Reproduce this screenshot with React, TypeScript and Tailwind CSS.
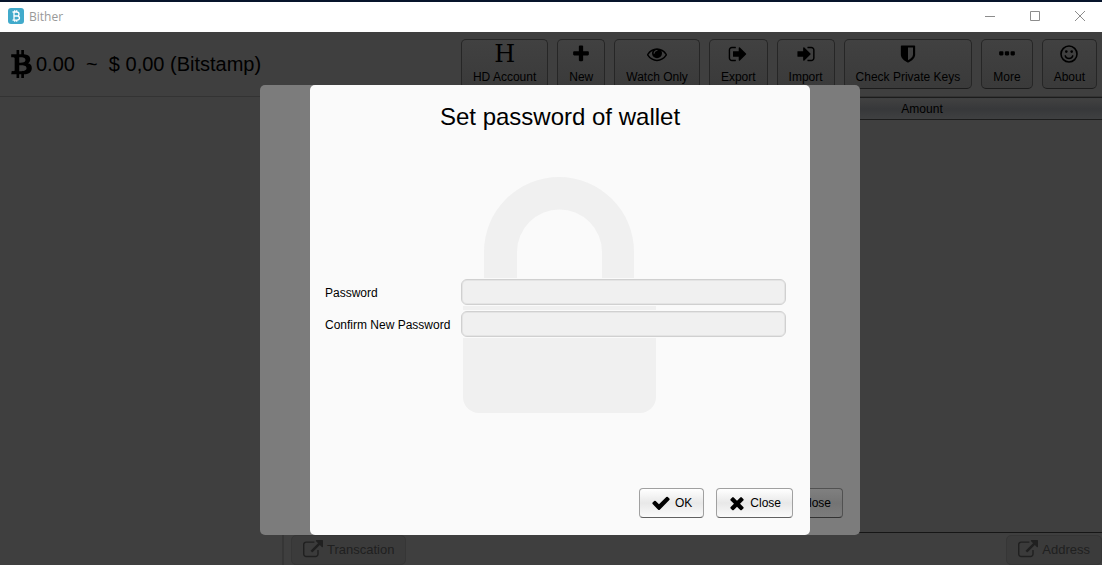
import React from "react";
import { FaBtc } from "react-icons/fa";

const PATHS = {
  plus: "M1600 736v192q0 40-28 68t-68 28h-416v416q0 40-28 68t-68 28h-192q-40 0-68-28t-28-68v-416h-416q-40 0-68-28t-28-68v-192q0-40 28-68t68-28h416v-416q0-40 28-68t68-28h192q40 0 68 28t28 68v416h416q40 0 68 28t28 68z",
  eye: "M1664 960q-152-236-381-353 61 104 61 225 0 185-131.5 316.5t-316.5 131.5-316.5-131.5-131.5-316.5q0-121 61-225-229 117-381 353 133 205 333.5 326.5t434.5 121.5 434.5-121.5 333.5-326.5zm-720-384q0-20-14-34t-34-14q-125 0-214.5 89.5t-89.5 214.5q0 20 14 34t34 14 34-14 14-34q0-86 61-147t147-61q20 0 34-14t14-34zm848 384q0 34-20 69-140 230-376.5 368.5t-499.5 138.5-499.5-139-376.5-368q-20-35-20-69t20-69q140-229 376.5-368t499.5-139 499.5 139 376.5 368q20 35 20 69z",
  signOut:
    "M704 1440q0 4 1 20t.5 26.5-3 23.5-10 19.5-20.5 6.5h-320q-119 0-203.5-84.5t-84.5-203.5v-704q0-119 84.5-203.5t203.5-84.5h320q13 0 22.5 9.5t9.5 22.5q0 4 1 20t.5 26.5-3 23.5-10 19.5-20.5 6.5h-320q-66 0-113 47t-47 113v704q0 66 47 113t113 47h312l11.5 1 11.5 3 8 5.5 7 9 2 13.5zm928-544q0 26-19 45l-544 544q-19 19-45 19t-45-19-19-45v-288h-448q-26 0-45-19t-19-45v-384q0-26 19-45t45-19h448v-288q0-26 19-45t45-19 45 19l544 544q19 19 19 45z",
  signIn:
    "M1312 896q0 26-19 45l-544 544q-19 19-45 19t-45-19-19-45v-288h-448q-26 0-45-19t-19-45v-384q0-26 19-45t45-19h448v-288q0-26 19-45t45-19 45 19l544 544q19 19 19 45zm352-352v704q0 119-84.5 203.5t-203.5 84.5h-320q-13 0-22.5-9.5t-9.5-22.5q0-4-1-20t-.5-26.5 3-23.5 10-19.5 20.5-6.5h320q66 0 113-47t47-113v-704q0-66-47-113t-113-47h-312l-11.5-1-11.5-3-8-5.5-7-9-2-13.5q0-4-1-20t-.5-26.5 3-23.5 10-19.5 20.5-6.5h320q119 0 203.5 84.5t84.5 203.5z",
  shield:
    "M1344 960v-640h-448v1137q119-63 213-137 235-184 235-360zm192-768v768q0 86-33.5 170.5t-83 150-118 127.5-126.5 103-121 77.5-89.5 49.5-42.5 20q-12 6-26 6t-26-6q-16-7-42.5-20t-89.5-49.5-121-77.5-126.5-103-118-127.5-83-150-33.5-170.5v-768q0-26 19-45t45-19h1152q26 0 45 19t19 45z",
  more: "M576 736v192q0 40-28 68t-68 28h-192q-40 0-68-28t-28-68v-192q0-40 28-68t68-28h192q40 0 68 28t28 68zm512 0v192q0 40-28 68t-68 28h-192q-40 0-68-28t-28-68v-192q0-40 28-68t68-28h192q40 0 68 28t28 68zm512 0v192q0 40-28 68t-68 28h-192q-40 0-68-28t-28-68v-192q0-40 28-68t68-28h192q40 0 68 28t28 68z",
  check:
    "M1671 566q0 40-28 68l-724 724-136 136q-28 28-68 28t-68-28l-136-136-362-362q-28-28-28-68t28-68l136-136q28-28 68-28t68 28l294 295 656-657q28-28 68-28t68 28l136 136q28 28 28 68z",
  times:
    "M1490 1322q0 40-28 68l-136 136q-28 28-68 28t-68-28l-294-294-294 294q-28 28-68 28t-68-28l-136-136q-28-28-28-68t28-68l294-294-294-294q-28-28-28-68t28-68l136-136q28-28 68-28t68 28l294 294 294-294q28-28 68-28t68 28l136 136q28 28 28 68t-28 68l-294 294 294 294q28 28 28 68z",
  external:
    "M1408 928v320q0 119-84.5 203.5t-203.5 84.5h-832q-119 0-203.5-84.5t-84.5-203.5v-832q0-119 84.5-203.5t203.5-84.5h704q14 0 23 9t9 23v64q0 14-9 23t-23 9h-704q-66 0-113 47t-47 113v832q0 66 47 113t113 47h832q66 0 113-47t47-113v-320q0-14 9-23t23-9h64q14 0 23 9t9 23zm384-864v512q0 26-19 45t-45 19-45-19l-176-176-652 652q-10 10-23 10t-23-10l-114-114q-10-10-10-23t10-23l652-652-176-176q-19-19-19-45t19-45 45-19h512q26 0 45 19t19 45z",
};

function Glyph({ name, className }: { name: keyof typeof PATHS; className: string }) {
  return (
    <svg viewBox="0 0 1792 1792" fill="currentColor" aria-hidden="true" className={className}>
      <path d={PATHS[name]} />
    </svg>
  );
}

function Smile() {
  return (
    <svg viewBox="0 0 20 20" aria-hidden="true" className="size-5" fill="none" stroke="currentColor">
      <circle cx="10" cy="10" r="8" strokeWidth="1.6" />
      <path d="M6.2 11.8a4 4 0 0 0 7.6 0" strokeWidth="1.4" strokeLinecap="round" />
      <circle cx="7.3" cy="7.6" r="1.3" fill="currentColor" stroke="none" />
      <circle cx="12.7" cy="7.6" r="1.3" fill="currentColor" stroke="none" />
    </svg>
  );
}

function ToolButton({ label, icon }: { label: string; icon: React.ReactNode }) {
  return (
    <button
      type="button"
      className="flex h-[50px] flex-col items-center rounded-[5px] border border-[#262626] border-b-[#1c1c1c] bg-linear-to-b from-[#414141] to-[#3a3a3a] px-[11px] pt-1 text-black"
    >
      <span className="flex h-5 items-center justify-center">{icon}</span>
      <span className="mt-[5px] text-xs leading-4 whitespace-nowrap">{label}</span>
    </button>
  );
}

function TitleBar() {
  return (
    <header className="flex h-8 shrink-0 items-center border-t-2 border-[#06142b] bg-white pl-2">
      <svg viewBox="0 0 16 16" aria-hidden="true" className="mb-0.5 size-4">
        <rect width="16" height="16" rx="3" fill="#41aacb" />
        <path
          d="M4.500 4h4.200q2.300 0 2.300 2t-1.800 2q2.300.2 2.300 2.100T8.900 12.200H4.500M6 4v8.200M6 8h3M6.700 2.300V4M8.700 2.300V4M6.700 12.200v1.600M8.700 12.200v1.600"
          fill="none"
          stroke="#fff"
          strokeWidth="1.3"
        />
      </svg>
      <h1 className="ml-[5px] font-['Open_Sans','Noto_Sans',sans-serif] text-xs text-[#999]">Bither</h1>
      <div className="ml-auto flex h-full pb-0.5 text-[#8c8c8c]">
        <button type="button" aria-label="Minimize" className="flex w-[45px] items-center justify-center">
          <svg viewBox="0 0 10 10" className="size-2.5" stroke="currentColor" fill="none">
            <path d="M0 5.500h10" />
          </svg>
        </button>
        <button type="button" aria-label="Maximize" className="flex w-[45px] items-center justify-center">
          <svg viewBox="0 0 10 10" className="size-2.5" stroke="currentColor" fill="none">
            <path d="M.5.500h9v9h-9z" />
          </svg>
        </button>
        <button type="button" aria-label="Close window" className="flex w-[45px] items-center justify-center">
          <svg viewBox="0 0 10 10" className="size-2.5" stroke="currentColor" fill="none">
            <path d="M0 0l10 10M10 0L0 10" />
          </svg>
        </button>
      </div>
    </header>
  );
}

function DialogButton({ icon, label }: { icon: "check" | "times"; label: string }) {
  return (
    <button
      type="button"
      className="flex h-[30px] items-center gap-1 rounded border border-[#a0a0a0] border-b-[#606060] bg-linear-to-b from-white via-[#e8e8e8] to-[#fafafa] px-[11px] text-xs text-black"
    >
      <Glyph name={icon} className={icon === "times" ? "-mx-px size-5" : "size-5"} />
      {label}
    </button>
  );
}

function Field({ id, label }: { id: string; label: string }) {
  return (
    <>
      <label htmlFor={id} className="pt-0.5 text-xs whitespace-nowrap">
        {label}
      </label>
      <div className="bg-[#fafafa] py-px">
        <input
          id={id}
          type="password"
          className="block h-[26px] w-full rounded-md border border-[#d0d0d0] bg-[#f0f0f0] px-2 text-xs shadow-[inset_0_0_0_1px_#e4e4e4] outline-none"
        />
      </div>
    </>
  );
}

function PasswordDialog() {
  return (
    <section
      role="dialog"
      aria-labelledby="dialog-title"
      className="relative flex h-full w-[500px] flex-col rounded-[5px] bg-[#fafafa] text-black"
    >
      <svg
        viewBox="0 0 194 236"
        aria-hidden="true"
        className="absolute top-[92px] left-[153px] w-[194px]"
        fill="#f0f0f0"
      >
        <path d="M21 128V75a75 75 0 0 1 150 0v53h-32V75a42.500 42.500 0 0 0-85 0v53z" />
        <path d="M0 128h193v92a16 16 0 0 1-16 16H16a16 16 0 0 1-16-16z" />
      </svg>
      <h2 id="dialog-title" className="mt-4 text-center text-2xl leading-8">
        Set password of wallet
      </h2>
      <form className="relative mt-[145px] grid grid-cols-[131px_1fr] items-center gap-x-[5px] gap-y-1 pr-6 pl-[15px]">
        <Field id="password" label="Password" />
        <Field id="confirm" label="Confirm New Password" />
      </form>
      <div className="mt-auto flex justify-end gap-3 pr-[17px] pb-[17px]">
        <DialogButton icon="check" label="OK" />
        <DialogButton icon="times" label="Close" />
      </div>
    </section>
  );
}

function LinkButton({ label }: { label: string }) {
  return (
    <button
      type="button"
      className="flex h-[30px] items-center gap-1 rounded-[5px] border border-[#363636] bg-[#3b3b3b] px-[11px] text-[13px] text-[#202020]"
    >
      <Glyph name="external" className="size-5" />
      {label}
    </button>
  );
}

export default function App() {
  return (
    <div className="flex h-screen flex-col overflow-hidden bg-[#3f3f3f] font-['Liberation_Sans',Arial,sans-serif]">
      <TitleBar />
      <div className="relative flex min-h-0 flex-1 flex-col">
        <div className="flex h-[65px] shrink-0 justify-between border-b border-[#333] pr-[5px] pl-[11px]">
          <div className="flex items-center text-xl text-black">
            <FaBtc className="h-7 w-[21px]" aria-hidden="true" />
            <span className="ml-1 whitespace-pre">0.00  ~  $ 0,00 (Bitstamp)</span>
          </div>
          <nav className="flex gap-[9px] pt-[7px]" aria-label="Wallet actions">
            <ToolButton
              label="HD Account"
              icon={<span className="font-['DejaVu_Serif',serif] text-2xl leading-5">H</span>}
            />
            <ToolButton label="New" icon={<Glyph name="plus" className="size-5" />} />
            <ToolButton label="Watch Only" icon={<Glyph name="eye" className="size-5" />} />
            <ToolButton label="Export" icon={<Glyph name="signOut" className="size-5" />} />
            <ToolButton label="Import" icon={<Glyph name="signIn" className="size-5" />} />
            <ToolButton label="Check Private Keys" icon={<Glyph name="shield" className="size-5" />} />
            <ToolButton label="More" icon={<Glyph name="more" className="size-5" />} />
            <ToolButton label="About" icon={<Smile />} />
          </nav>
        </div>
        <main className="flex min-h-0 flex-1">
          <aside className="w-[284px] shrink-0 border-r-2 border-[#363636]" />
          <div className="flex min-w-0 flex-1 flex-col">
            <table className="w-full table-fixed text-xs text-black">
              <thead>
                <tr className="h-[22px] border-y border-[#1c1c1c] bg-linear-to-b from-[#414141] via-[#37383a] to-[#3f4041]">
                  <th className="w-[56%]" />
                  <th className="font-normal">Amount</th>
                </tr>
              </thead>
            </table>
            <div className="mt-auto flex h-[33px] justify-between border-t border-[#161616] pt-0.5 pl-[7px]">
              <LinkButton label="Transcation" />
              <LinkButton label="Address" />
            </div>
          </div>
        </main>
        <div className="absolute inset-x-0 top-[53px] bottom-[30px] mx-auto w-[600px] translate-x-[9px] rounded-[5px] bg-[#7c7c7c]">
          <div className="absolute right-[17px] bottom-[17px] flex h-[30px] w-[77px] items-center justify-end rounded border border-[#515151] border-b-[#333] bg-linear-to-b from-[#808080] via-[#747474] to-[#7c7c7c] px-[11px] text-xs text-black">
            Close
          </div>
          <div className="mx-auto h-full w-[500px]">
            <PasswordDialog />
          </div>
        </div>
      </div>
    </div>
  );
}
